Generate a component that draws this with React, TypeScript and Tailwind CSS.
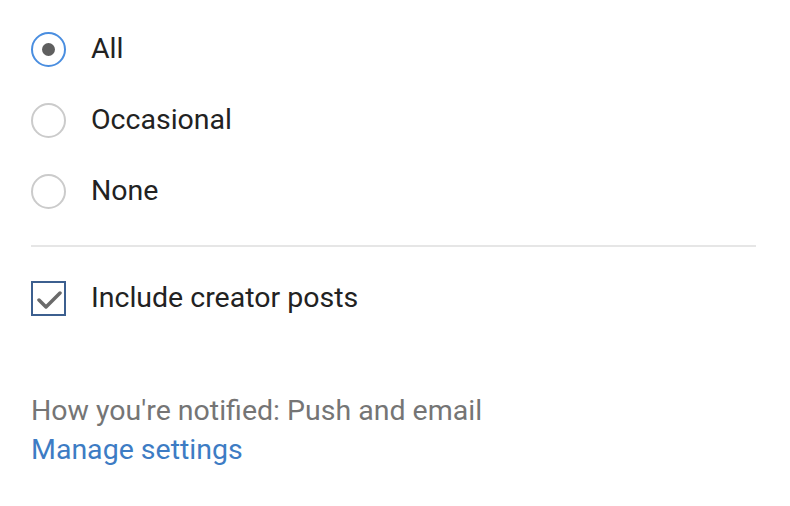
import { useState } from "react";

const options = ["All", "Occasional", "None"];

function Radio({ checked }: { checked: boolean }) {
  return (
    <span
      className={
        checked
          ? "flex h-[35px] w-[35px] shrink-0 items-center justify-center rounded-full border-2 border-[#4a8ee0]"
          : "flex h-[35px] w-[35px] shrink-0 items-center justify-center rounded-full border-2 border-[#cbcbcb]"
      }
    >
      {checked && <span className="h-[13px] w-[13px] rounded-full bg-[#5f5f5f] blur-[0.6px]" />}
    </span>
  );
}

export default function App() {
  const [choice, setChoice] = useState("All");
  const [creator, setCreator] = useState(true);

  return (
    <div className="min-h-screen w-[790px] bg-white pl-[31px] pr-[34px] pt-[14px] font-['Roboto',sans-serif]">
      {options.map((o) => (
        <label
          key={o}
          className="flex h-[71px] cursor-pointer items-center gap-[25px]"
          onClick={() => setChoice(o)}
        >
          <Radio checked={choice === o} />
          <span className="text-[28.5px] text-[#222222]">{o}</span>
        </label>
      ))}

      <div className="mt-[18px] h-[2px] bg-[#e6e6e6]" />

      <label
        className="mt-[16px] flex h-[71px] cursor-pointer items-center gap-[25px]"
        onClick={() => setCreator(!creator)}
      >
        <span className="flex h-[35px] w-[35px] shrink-0 items-center justify-center border-2 border-[#3c5f8f]">
          {creator && (
            <svg width="28" height="24" viewBox="0 0 28 24" className="blur-[0.4px]">
              <path d="M4 13 L11 20 L25 6" fill="none" stroke="#6a6a6a" strokeWidth="3.5" strokeLinecap="round" strokeLinejoin="round" />
            </svg>
          )}
        </span>
        <span className="text-[28.5px] text-[#222222]">Include creator posts</span>
      </label>

      <div className="mt-[57px] text-[28.5px] leading-[39px]">
        <p className="text-[#757575]">How you're notified: Push and email</p>
        <a href="#" className="text-[#3d7cc4]">Manage settings</a>
      </div>
    </div>
  );
}
